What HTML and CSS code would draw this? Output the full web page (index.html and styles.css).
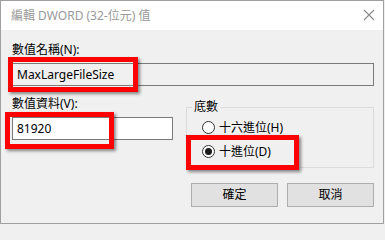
FILE: index.html
```html
<!DOCTYPE html>
<html lang="zh-Hant">
<head>
<meta charset="utf-8">
<title>編輯 DWORD (32-位元) 值</title>
<link rel="stylesheet" href="styles.css">
</head>
<body>
<div class="window">
  <div class="titlebar">
    <span class="title">編輯 DWORD (32-位元) 值</span>
    <svg class="close" width="12" height="12" viewBox="0 0 12 12"><path d="M1 1L11 11M11 1L1 11" stroke="#8a8a8a" stroke-width="1.1" fill="none"/></svg>
  </div>
  <div class="content">
    <div class="label">數值名稱(N):</div>
    <div class="field readonly">MaxLargeFileSize</div>
    <div class="row">
      <div class="col-left">
        <div class="label">數值資料(V):</div>
        <div class="field">81920</div>
      </div>
      <div class="col-right">
        <fieldset class="group">
          <legend>底數</legend>
          <div class="radio"><span class="dot"></span><span>十六進位(H)</span></div>
          <div class="radio"><span class="dot checked"></span><span>十進位(D)</span></div>
        </fieldset>
        <div class="buttons">
          <div class="btn">確定</div>
          <div class="btn">取消</div>
        </div>
      </div>
    </div>
  </div>
  <div class="mark mark-name"></div>
  <div class="mark mark-value"></div>
  <div class="mark mark-dec"></div>
</div>
</body>
</html>
```
FILE: styles.css
```css
html, body {
  margin: 0;
  padding: 0;
  background: #f0f0f0;
}
body {
  font-family: "Noto Sans", "Noto Sans CJK TC", sans-serif;
  font-size: 12px;
  color: #000;
}
.window {
  position: relative;
  width: 384px;
  height: 224px;
  box-sizing: border-box;
  border: 1px solid #a0a0a0;
  background: #f0f0f0;
}
.titlebar {
  height: 29px;
  background: #fff;
  display: flex;
  align-items: center;
  justify-content: space-between;
  padding: 0 8px 0 10px;
}
.title {
  color: #999;
  font-size: 12px;
  line-height: 16px;
  padding-top: 1px;
}
.close {
  display: block;
  margin-top: -1px;
}
.content {
  padding: 12px 9px 0 11px;
}
.label {
  line-height: 16px;
  height: 16px;
}
.field {
  box-sizing: border-box;
  height: 23px;
  border: 1px solid #7a7a7a;
  background: #fff;
  padding: 0 3px 0 4px;
  line-height: 21px;
  font-size: 12px;
  margin-top: 5px;
}
.field.readonly {
  background: #f0f0f0;
}
.row {
  display: flex;
  margin-top: 10px;
  gap: 13px;
}
.col-left {
  width: 161px;
}
.col-right {
  flex: 1;
  margin-top: 3px;
}
.group {
  margin: 0;
  padding: 2px 6px 6px 5px;
  border: 1px solid #dcdcdc;
  min-width: 0;
}
.group legend {
  padding: 0 2px;
  line-height: 16px;
}
.radio {
  display: flex;
  align-items: center;
  height: 20px;
  gap: 4px;
  padding-left: 10px;
}
.radio + .radio {
  margin-top: 4px;
}
.dot {
  box-sizing: border-box;
  width: 13px;
  height: 13px;
  border: 1px solid #333;
  border-radius: 50%;
  background: #fff;
  display: flex;
  align-items: center;
  justify-content: center;
}
.dot.checked::after {
  content: "";
  width: 7px;
  height: 7px;
  border-radius: 50%;
  background: #1a1a1a;
}
.buttons {
  display: flex;
  justify-content: flex-end;
  gap: 9px;
  margin-top: 15px;
}
.btn {
  box-sizing: border-box;
  width: 87px;
  height: 24px;
  border: 1px solid #adadad;
  background: #e1e1e1;
  text-align: center;
  line-height: 22px;
}
.mark {
  position: absolute;
  box-sizing: border-box;
  border: 5px solid #ff0000;
  box-shadow: 2px 2px 3px rgba(0, 0, 0, 0.45);
}
.mark-name {
  left: 7px;
  top: 56px;
  width: 130px;
  height: 35px;
}
.mark-value {
  left: 4px;
  top: 111px;
  width: 109px;
  height: 37px;
}
.mark-dec {
  left: 185px;
  top: 134px;
  width: 113px;
  height: 35px;
}
```
